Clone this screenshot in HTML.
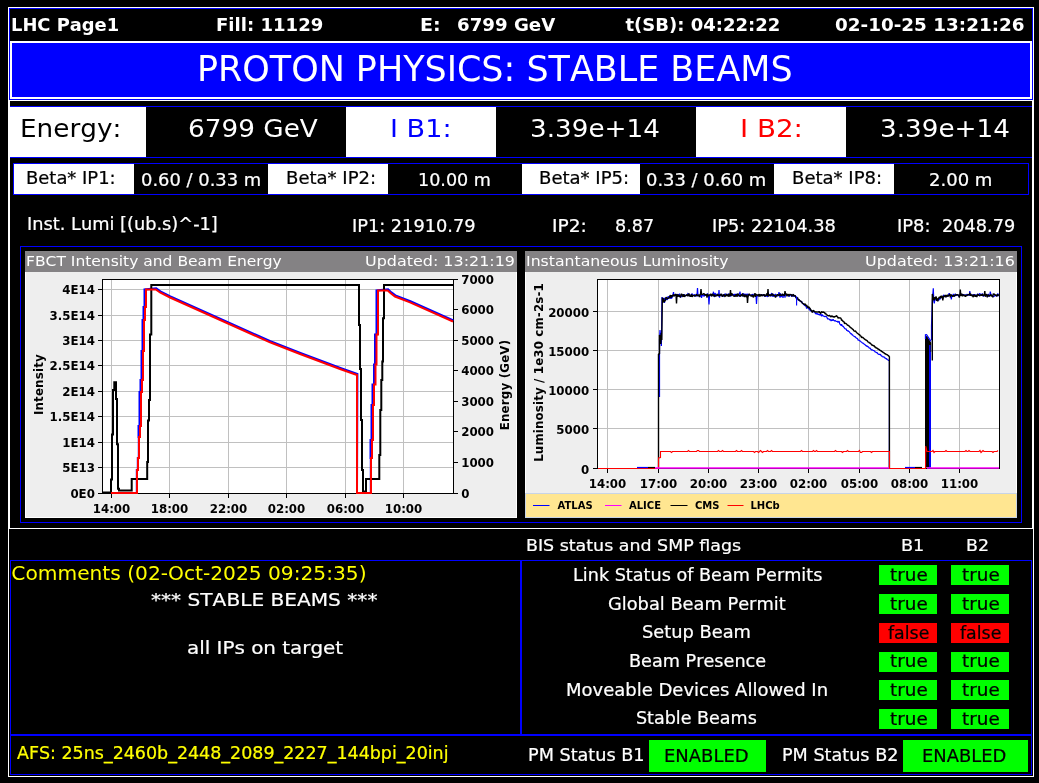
<!DOCTYPE html>
<html><head><meta charset="utf-8"><title>LHC Page1</title>
<style>
html,body{margin:0;padding:0;background:#000;}
body{width:1039px;height:783px;position:relative;overflow:hidden;font-family:"DejaVu Sans","Liberation Sans",sans-serif;}
#pg{position:absolute;left:0;top:0;width:1039px;height:783px;will-change:transform;}
.a{position:absolute;}
.t{white-space:pre;line-height:1;font-kerning:none;}
</style></head><body><div id="pg">
<div class="a" style="left:8px;top:7px;width:1026px;height:770px;box-sizing:border-box;border:1px solid #fff;"></div>
<div class="a" style="left:9px;top:8px;width:1024px;height:92px;box-sizing:border-box;border:1px solid #0000ff;"></div>
<div class="a" style="left:9px;top:100px;width:1024px;height:429px;box-sizing:border-box;border:1px solid #fff;"></div>
<div class="a t" style="top:15.77px;font-size:18px;color:#fff;font-weight:bold;left:10.96px;transform:scaleX(0.9927);transform-origin:0 0;">LHC Page1</div>
<div class="a t" style="top:15.77px;font-size:18px;color:#fff;font-weight:bold;left:215.84px;transform:scaleX(1.0039);transform-origin:0 0;">Fill: 11129</div>
<div class="a t" style="top:15.77px;font-size:18px;color:#fff;font-weight:bold;left:420.0px;transform:scaleX(1.0582);transform-origin:0 0;">E:</div>
<div class="a t" style="top:15.77px;font-size:18px;color:#fff;font-weight:bold;left:456.87px;transform:scaleX(1.0096);transform-origin:0 0;">6799 GeV</div>
<div class="a t" style="top:15.77px;font-size:18px;color:#fff;font-weight:bold;left:625.51px;">t(SB): 04:22:22</div>
<div class="a t" style="top:15.77px;font-size:18px;color:#fff;font-weight:bold;left:835.37px;transform:scaleX(1.0200);transform-origin:0 0;">02-10-25 13:21:26</div>
<div class="a" style="left:10px;top:41px;width:1022px;height:58px;background:#0000ff;box-sizing:border-box;border:2px solid #fff;"></div>
<div class="a t" style="top:52.39px;font-size:35px;color:#fff;left:197.37px;transform:scaleX(0.9978);transform-origin:0 0;">PROTON PHYSICS: STABLE BEAMS</div>
<div class="a" style="left:10px;top:106px;width:1022px;height:1px;background:#0000ff;"></div>
<div class="a" style="left:10px;top:157px;width:1022px;height:1px;background:#0000ff;"></div>
<div class="a" style="left:10px;top:107px;width:136px;height:50px;background:#fff;"></div>
<div class="a" style="left:346px;top:107px;width:150px;height:50px;background:#fff;"></div>
<div class="a" style="left:696px;top:107px;width:150px;height:50px;background:#fff;"></div>
<div class="a t" style="top:116.34px;font-size:25.6px;color:#000;left:20.22px;transform:scaleX(1.0268);transform-origin:0 0;">Energy:</div>
<div class="a t" style="top:116.34px;font-size:25.6px;color:#fff;left:187.86px;transform:scaleX(1.0274);transform-origin:0 0;">6799 GeV</div>
<div class="a t" style="top:116.34px;font-size:25.6px;color:#0000ff;left:390.04px;transform:scaleX(1.0577);transform-origin:0 0;">I B1:</div>
<div class="a t" style="top:116.34px;font-size:25.6px;color:#fff;left:529.6px;transform:scaleX(1.0244);transform-origin:0 0;">3.39e+14</div>
<div class="a t" style="top:116.34px;font-size:25.6px;color:#f00;left:739.58px;transform:scaleX(1.0824);transform-origin:0 0;">I B2:</div>
<div class="a t" style="top:116.34px;font-size:25.6px;color:#fff;left:880.2px;transform:scaleX(1.0252);transform-origin:0 0;">3.39e+14</div>
<div class="a" style="left:13px;top:163px;width:1016px;height:32px;box-sizing:border-box;border:1px solid #0000ff;"></div>
<div class="a" style="left:14px;top:164px;width:120px;height:30px;background:#fff;"></div>
<div class="a" style="left:268px;top:164px;width:120px;height:30px;background:#fff;"></div>
<div class="a" style="left:522px;top:164px;width:118px;height:30px;background:#fff;"></div>
<div class="a" style="left:774px;top:164px;width:120px;height:30px;background:#fff;"></div>
<div class="a t" style="top:170.22px;font-size:17px;color:#000;-webkit-text-stroke:0.22px;left:25.74px;transform:scaleX(1.0552);transform-origin:0 0;">Beta* IP1:</div>
<div class="a t" style="top:172.02px;font-size:17px;color:#fff;-webkit-text-stroke:0.22px;left:140.57px;transform:scaleX(1.0525);transform-origin:0 0;">0.60 / 0.33 m</div>
<div class="a t" style="top:170.22px;font-size:17px;color:#000;-webkit-text-stroke:0.22px;left:285.73px;transform:scaleX(1.0613);transform-origin:0 0;">Beta* IP2:</div>
<div class="a t" style="top:172.02px;font-size:17px;color:#fff;-webkit-text-stroke:0.22px;left:418.07px;transform:scaleX(1.0324);transform-origin:0 0;">10.00 m</div>
<div class="a t" style="top:170.22px;font-size:17px;color:#000;-webkit-text-stroke:0.22px;left:539.48px;transform:scaleX(1.0613);transform-origin:0 0;">Beta* IP5:</div>
<div class="a t" style="top:172.02px;font-size:17px;color:#fff;-webkit-text-stroke:0.22px;left:646.32px;transform:scaleX(1.0525);transform-origin:0 0;">0.33 / 0.60 m</div>
<div class="a t" style="top:170.22px;font-size:17px;color:#000;-webkit-text-stroke:0.22px;left:791.98px;transform:scaleX(1.0613);transform-origin:0 0;">Beta* IP8:</div>
<div class="a t" style="top:172.02px;font-size:17px;color:#fff;-webkit-text-stroke:0.22px;left:929.43px;transform:scaleX(1.0591);transform-origin:0 0;">2.00 m</div>
<div class="a t" style="top:216.42px;font-size:17px;color:#fff;-webkit-text-stroke:0.22px;left:27.01px;transform:scaleX(1.0447);transform-origin:0 0;">Inst. Lumi [(ub.s)^-1]</div>
<div class="a t" style="top:218.32px;font-size:17px;color:#fff;-webkit-text-stroke:0.22px;left:352.16px;transform:scaleX(1.0436);transform-origin:0 0;">IP1: 21910.79</div>
<div class="a t" style="top:218.32px;font-size:17px;color:#fff;-webkit-text-stroke:0.22px;left:551.97px;transform:scaleX(1.0939);transform-origin:0 0;">IP2:</div>
<div class="a t" style="top:218.32px;font-size:17px;color:#fff;-webkit-text-stroke:0.22px;left:615.31px;transform:scaleX(1.0328);transform-origin:0 0;">8.87</div>
<div class="a t" style="top:218.32px;font-size:17px;color:#fff;-webkit-text-stroke:0.22px;left:711.75px;transform:scaleX(1.0468);transform-origin:0 0;">IP5: 22104.38</div>
<div class="a t" style="top:218.32px;font-size:17px;color:#fff;-webkit-text-stroke:0.22px;left:897.15px;transform:scaleX(1.0513);transform-origin:0 0;">IP8:</div>
<div class="a t" style="top:218.32px;font-size:17px;color:#fff;-webkit-text-stroke:0.22px;left:942.3px;transform:scaleX(1.0404);transform-origin:0 0;">2048.79</div>
<div class="a" style="left:20px;top:246px;width:1002px;height:277px;box-sizing:border-box;border:1px solid #0000ff;"></div>
<div class="a" style="left:25px;top:251px;width:492px;height:267px;background:#ffffff;"></div>
<div class="a" style="left:26px;top:251px;width:490px;height:266px;background:#eeeeee;"></div>
<div class="a" style="left:25px;top:251px;width:492px;height:21px;background:#848284;"></div>
<div class="a t" style="top:254.16px;font-size:14px;color:#fff;left:25.98px;transform:scaleX(1.1083);transform-origin:0 0;">FBCT Intensity and Beam Energy</div>
<div class="a t" style="top:254.16px;font-size:14px;color:#fff;left:364.86px;transform:scaleX(1.1396);transform-origin:0 0;">Updated: 13:21:19</div>
<div class="a" style="left:525px;top:251px;width:492px;height:267px;background:#ffffff;"></div>
<div class="a" style="left:526px;top:251px;width:490px;height:266px;background:#eeeeee;"></div>
<div class="a" style="left:525px;top:251px;width:492px;height:21px;background:#848284;"></div>
<div class="a t" style="top:254.16px;font-size:14px;color:#fff;left:525.96px;transform:scaleX(1.1215);transform-origin:0 0;">Instantaneous Luminosity</div>
<div class="a t" style="top:254.16px;font-size:14px;color:#fff;left:864.86px;transform:scaleX(1.1387);transform-origin:0 0;">Updated: 13:21:16</div>
<svg class="a" style="left:0;top:0" width="1039" height="783" viewBox="0 0 1039 783" font-family='"DejaVu Sans","Liberation Sans",sans-serif'>
<rect x="102.5" y="279.5" width="351" height="214" fill="#fff"/>
<path d="M111.5 280V493 M169.5 280V493 M228.5 280V493 M286.5 280V493 M345.5 280V493 M403.5 280V493 M103 467.5H453 M103 442.5H453 M103 416.5H453 M103 391.5H453 M103 365.5H453 M103 340.5H453 M103 315.5H453 M103 289.5H453" stroke="#c0c0c0" stroke-width="1" fill="none"/>
<rect x="102.5" y="279.5" width="351" height="214" fill="none" stroke="#000" stroke-width="1"/>
<polyline points="111.0,493.0 136.1,493.0 136.8,493.0 136.8,470.0 137.8,470.0 137.8,458.0 138.8,458.0 138.8,437.0 138.5,437.0 138.5,426.0 139.5,426.0 139.5,392.0 140.5,392.0 140.5,380.0 141.5,380.0 141.5,351.0 142.5,351.0 142.5,320.0 143.5,320.0 143.5,307.0 144.5,307.0 144.5,289.5 156.2,288.4 160.4,291.4 170.4,296.4 228.4,322.4 270.4,341.2 300.4,352.9 340.4,367.9 357.4,373.9 357.0,493.0 369.8,493.0 370.8,493.0 370.8,458.0 370.5,458.0 370.5,440.0 371.5,440.0 371.5,405.0 372.5,405.0 372.5,384.5 374.0,384.5 374.0,364.5 375.0,364.5 375.0,334.5 376.5,334.5 376.5,290.5 388.1,289.4 391.4,292.4 395.4,295.4 410.4,301.2 453.4,320.4" stroke="#0000ff" stroke-width="2" fill="none" stroke-linejoin="miter"/>
<polyline points="102.0,492.5 111.0,492.5 111.0,479.5 112.0,479.5 112.0,434.5 113.0,434.5 113.0,390.0 114.3,390.0 114.3,382.3 116.0,382.3 116.0,399.0 117.0,399.0 117.0,444.3 118.0,444.3 118.0,488.7 119.0,488.7 119.0,490.5 131.7,490.5 131.7,479.0 147.2,479.0 147.2,462.0 148.0,462.0 148.0,420.6 149.0,420.6 149.0,400.0 150.0,400.0 150.0,334.5 151.3,334.5 151.3,285.0 359.0,285.0 359.0,325.0 360.0,325.0 360.0,369.0 361.0,369.0 361.0,420.0 362.0,420.0 362.0,470.0 363.0,470.0 363.0,491.5 366.0,491.5 366.0,479.0 379.3,479.0 379.3,455.0 380.3,455.0 380.3,410.0 381.3,410.0 381.3,380.0 382.3,380.0 382.3,361.6 383.0,361.6 383.0,318.3 384.0,318.3 384.0,285.0 453.0,285.0" stroke="#000" stroke-width="2" fill="none" stroke-linejoin="miter"/>
<polyline points="111.0,493.0 136.3,493.0 137.0,493.0 137.0,470.0 138.0,470.0 138.0,458.0 139.0,458.0 139.0,437.0 140.0,437.0 140.0,426.0 141.0,426.0 141.0,392.0 142.0,392.0 142.0,380.0 143.0,380.0 143.0,351.0 144.0,351.0 144.0,320.0 145.0,320.0 145.0,307.0 146.0,307.0 146.0,289.5 155.8,289.5 160.0,292.5 170.0,297.5 228.0,323.5 270.0,342.3 300.0,354.0 340.0,369.0 357.0,375.0 357.0,493.0 370.0,493.0 371.0,493.0 371.0,458.0 372.0,458.0 372.0,440.0 373.0,440.0 373.0,405.0 374.0,405.0 374.0,384.5 375.5,384.5 375.5,364.5 376.5,364.5 376.5,334.5 378.0,334.5 378.0,290.5 387.7,290.5 391.0,293.5 395.0,296.5 410.0,302.3 453.0,321.5" stroke="#ff0000" stroke-width="2" fill="none" stroke-linejoin="miter"/>
<path d="M98 493.5H102 M98 467.5H102 M98 442.5H102 M98 416.5H102 M98 391.5H102 M98 365.5H102 M98 340.5H102 M98 315.5H102 M98 289.5H102 M454 493.5H458 M454 462.5H458 M454 431.5H458 M454 401.5H458 M454 370.5H458 M454 340.5H458 M454 309.5H458 M454 279.5H458 M111.5 494V498 M169.5 494V498 M228.5 494V498 M286.5 494V498 M345.5 494V498 M403.5 494V498" stroke="#000" stroke-width="1" fill="none"/>
<text x="94.9" y="498.3" font-size="11.8" font-weight="bold" text-anchor="end">0E0</text>
<text x="94.9" y="472.3" font-size="11.8" font-weight="bold" text-anchor="end">5E13</text>
<text x="94.9" y="447.3" font-size="11.8" font-weight="bold" text-anchor="end">1E14</text>
<text x="94.9" y="421.3" font-size="11.8" font-weight="bold" text-anchor="end">1.5E14</text>
<text x="94.9" y="396.3" font-size="11.8" font-weight="bold" text-anchor="end">2E14</text>
<text x="94.9" y="370.3" font-size="11.8" font-weight="bold" text-anchor="end">2.5E14</text>
<text x="94.9" y="345.3" font-size="11.8" font-weight="bold" text-anchor="end">3E14</text>
<text x="94.9" y="320.3" font-size="11.8" font-weight="bold" text-anchor="end">3.5E14</text>
<text x="94.9" y="294.3" font-size="11.8" font-weight="bold" text-anchor="end">4E14</text>
<text x="461.2" y="498.3" font-size="11.8" font-weight="bold">0</text>
<text x="461.2" y="467.3" font-size="11.8" font-weight="bold">1000</text>
<text x="461.2" y="436.3" font-size="11.8" font-weight="bold">2000</text>
<text x="461.2" y="406.3" font-size="11.8" font-weight="bold">3000</text>
<text x="461.2" y="375.3" font-size="11.8" font-weight="bold">4000</text>
<text x="461.2" y="345.3" font-size="11.8" font-weight="bold">5000</text>
<text x="461.2" y="314.3" font-size="11.8" font-weight="bold">6000</text>
<text x="461.2" y="284.3" font-size="11.8" font-weight="bold">7000</text>
<text x="111.5" y="513.4" font-size="11.8" font-weight="bold" text-anchor="middle">14:00</text>
<text x="169.5" y="513.4" font-size="11.8" font-weight="bold" text-anchor="middle">18:00</text>
<text x="228.5" y="513.4" font-size="11.8" font-weight="bold" text-anchor="middle">22:00</text>
<text x="286.5" y="513.4" font-size="11.8" font-weight="bold" text-anchor="middle">02:00</text>
<text x="345.5" y="513.4" font-size="11.8" font-weight="bold" text-anchor="middle">06:00</text>
<text x="403.5" y="513.4" font-size="11.8" font-weight="bold" text-anchor="middle">10:00</text>
<text transform="translate(43.4,384.6) rotate(-90)" font-size="11.8" font-weight="bold" letter-spacing="0.2" text-anchor="middle">Intensity</text>
<text transform="translate(509,385) rotate(-90)" font-size="11.8" font-weight="bold" letter-spacing="0.2" text-anchor="middle">Energy (GeV)</text>
<rect x="597.5" y="279.5" width="402" height="189" fill="#fff"/>
<path d="M607.5 280V468 M658.5 280V468 M708.5 280V468 M758.5 280V468 M808.5 280V468 M859.5 280V468 M909.5 280V468 M959.5 280V468 M598 428.5H999 M598 389.5H999 M598 350.5H999 M598 311.5H999" stroke="#c0c0c0" stroke-width="1" fill="none"/>
<rect x="597.5" y="279.5" width="402" height="189" fill="none" stroke="#000" stroke-width="1"/>
<polyline points="659.5,397.0 659.5,376.0 659.5,340.0 660.0,330.0 660.8,338.0 661.4,346.0 662.0,297.0 662.5,301.5 663.0,301.8 663.5,298.4 664.0,298.1 664.5,302.9 665.0,297.9 665.5,298.9 666.0,299.6 666.5,298.9 667.0,299.8 667.5,299.1 668.0,296.7 668.5,296.4 669.0,297.8 669.5,298.1 670.0,298.1 670.5,296.1 671.0,298.9 671.5,296.8 672.0,298.2 672.5,296.1 673.0,294.7 673.5,292.0 674.0,295.7 674.5,295.9 675.0,295.5 675.5,295.1 676.0,295.2 676.5,294.8 677.0,294.4 677.5,294.6 678.0,296.8 678.5,294.4 679.0,295.3 679.5,293.7 680.0,295.4 680.5,297.6 681.0,296.1 681.5,296.8 682.0,295.4 682.5,295.3 683.0,295.0 683.5,295.4 684.0,294.3 684.5,295.1 685.0,295.1 685.5,295.8 686.0,295.4 686.5,295.8 687.0,295.0 687.5,295.3 688.0,293.0 688.5,296.0 689.0,294.9 689.5,294.5 690.0,296.1 690.5,295.3 691.0,294.8 691.5,295.2 692.0,293.5 692.5,295.4 693.0,295.0 693.5,295.6 694.0,295.1 694.5,294.5 695.0,296.3 695.5,296.0 696.0,294.8 696.5,296.3 697.0,294.7 697.5,288.0 698.0,296.0 698.5,295.4 699.0,295.5 699.5,296.1 700.0,296.4 700.5,295.8 701.0,295.2 701.5,297.9 702.0,296.0 702.5,294.3 703.0,295.0 703.5,295.3 704.0,296.5 704.5,295.7 705.0,294.3 705.5,294.9 706.0,295.4 706.5,295.4 707.0,295.1 707.5,293.4 708.0,295.3 708.5,296.3 709.0,304.5 709.5,296.5 710.0,294.8 710.5,295.3 711.0,294.8 711.5,294.7 712.0,295.4 712.5,295.6 713.0,294.5 713.5,291.7 714.0,296.3 714.5,296.8 715.0,293.1 715.5,294.1 716.0,295.5 716.5,295.1 717.0,294.1 717.5,295.0 718.0,296.1 718.5,295.8 719.0,290.0 719.5,297.6 720.0,295.0 720.5,294.4 721.0,294.4 721.5,295.0 722.0,295.5 722.5,295.0 723.0,296.8 723.5,295.8 724.0,294.5 724.5,295.6 725.0,293.6 725.5,294.7 726.0,293.9 726.5,295.3 727.0,294.3 727.5,295.0 728.0,294.5 728.5,293.6 729.0,295.3 729.5,294.9 730.0,294.5 730.5,296.5 731.0,294.7 731.5,295.1 732.0,295.1 732.5,294.5 733.0,295.0 733.5,294.7 734.0,294.3 734.5,295.8 735.0,293.9 735.5,295.5 736.0,294.4 736.5,294.2 737.0,294.0 737.5,295.6 738.0,294.4 738.5,296.3 739.0,293.6 739.5,294.2 740.0,291.5 740.5,296.3 741.0,294.9 741.5,294.6 742.0,295.1 742.5,296.4 743.0,293.3 743.5,293.8 744.0,295.4 744.5,294.9 745.0,293.7 745.5,296.0 746.0,296.7 746.5,294.0 747.0,294.5 747.5,294.0 748.0,295.8 748.5,295.4 749.0,293.9 749.5,295.2 750.0,295.0 750.5,295.7 751.0,296.1 751.5,294.8 752.0,294.7 752.5,294.7 753.0,294.0 753.5,296.2 754.0,295.5 754.5,295.2 755.0,295.5 755.5,295.8 756.0,295.8 756.5,304.0 757.0,295.8 757.5,296.2 758.0,295.4 758.5,294.2 759.0,296.1 759.5,294.6 760.0,294.8 760.5,295.2 761.0,295.2 761.5,294.6 762.0,295.6 762.5,294.8 763.0,295.5 763.5,295.6 764.0,294.4 764.5,296.5 765.0,295.5 765.5,296.2 766.0,295.9 766.5,294.5 767.0,296.3 767.5,296.9 768.0,294.7 768.5,293.7 769.0,296.0 769.5,294.6 770.0,294.5 770.5,296.0 771.0,296.2 771.5,293.0 772.0,294.3 772.5,296.5 773.0,294.9 773.5,294.0 774.0,296.8 774.5,295.7 775.0,295.2 775.5,294.0 776.0,294.7 776.5,296.0 777.0,296.2 777.5,295.9 778.0,294.6 778.5,294.6 779.0,292.0 779.5,294.5 780.0,297.7 780.5,293.4 781.0,296.9 781.5,296.3 782.0,294.5 782.5,295.0 783.0,297.9 783.5,294.2 784.0,295.2 784.5,294.0 785.0,297.7 785.5,294.4 786.0,295.2 786.5,294.7 787.0,295.3 787.5,294.5 788.0,294.5 788.5,294.8 789.0,296.8 789.5,295.3 790.0,295.1 790.5,294.5 791.0,295.0 791.5,296.7 792.0,294.5 792.5,295.2 793.0,295.9 793.5,296.8 793.6,295.6 794.1,295.3 794.6,296.4 795.1,295.2 795.6,296.6 796.1,298.3 796.6,297.7 797.1,298.6 797.6,298.2 798.1,299.9 798.6,300.1 799.1,300.7 799.6,300.3 800.1,301.2 800.6,300.9 801.1,302.1 801.6,301.2 802.1,303.0 802.6,303.5 803.1,303.4 803.6,304.8 804.1,304.4 804.6,305.9 805.1,305.1 805.6,305.4 806.1,306.2 806.6,308.6 807.1,306.3 807.6,307.4 808.1,307.8 808.6,308.9 809.1,308.0 809.6,310.4 810.1,308.7 810.6,311.0 811.1,310.4 811.6,310.5 812.1,311.8 812.6,310.9 813.1,312.1 813.6,311.6 814.1,311.8 814.6,311.9 815.1,312.8 815.6,314.0 816.1,313.0 816.6,314.2 817.1,313.2 817.6,314.2 818.1,314.4 818.6,314.1 819.1,314.8 819.6,314.7 820.1,314.9 820.6,314.0 821.1,315.2 821.6,316.3 822.1,314.4 822.6,315.6 823.1,315.8 823.6,316.1 824.1,316.4 824.6,316.7 825.1,316.2 825.6,316.7 826.1,316.4 826.6,316.7 827.1,317.8 827.6,318.9 828.1,319.0 828.6,318.9 829.1,319.0 829.6,319.9 830.1,319.6 830.6,319.8 831.1,321.1 831.6,319.8 832.1,320.2 832.6,320.6 833.1,319.2 833.6,320.2 834.1,320.6 834.6,321.1 835.1,320.5 835.6,321.0 836.1,321.3 836.6,321.5 837.1,321.1 837.6,321.9 838.1,322.2 838.6,321.8 839.1,321.0 839.6,323.5 840.1,324.5 840.6,324.1 841.1,325.8 841.6,324.3 842.1,325.7 842.6,326.4 843.1,326.0 843.6,326.9 844.1,327.5 844.6,328.4 845.1,328.8 845.6,328.9 846.1,328.9 846.6,330.3 847.1,330.4 847.6,331.0 848.1,330.6 848.6,331.5 849.1,331.5 849.6,332.2 850.1,333.0 850.6,333.4 851.1,334.0 851.6,333.8 852.1,334.9 852.6,334.9 853.1,335.6 853.6,336.0 854.1,336.3 854.6,336.7 855.1,336.5 855.6,337.5 856.1,337.8 856.6,338.2 857.1,338.4 857.6,338.8 858.1,340.2 858.6,339.9 859.1,340.2 859.6,341.0 860.1,340.9 860.6,341.2 861.1,342.0 861.6,342.2 862.1,342.7 862.6,343.1 863.1,343.2 863.6,343.6 864.1,344.2 864.6,344.4 865.1,344.8 865.6,345.4 866.1,345.6 866.6,346.3 867.1,346.0 867.6,346.6 868.1,346.9 868.6,346.9 869.1,347.9 869.6,348.1 870.1,348.1 870.6,349.1 871.1,349.3 871.6,350.2 872.1,349.7 872.6,350.0 873.1,350.4 873.6,350.5 874.1,350.9 874.6,350.9 875.1,351.9 875.6,352.0 876.1,352.4 876.6,352.7 877.1,352.6 877.6,353.6 878.1,353.9 878.6,354.4 879.1,354.2 879.6,354.4 880.1,354.6 880.6,354.4 881.1,355.9 881.6,355.7 882.1,356.4 882.6,356.7 883.1,356.9 883.6,356.8 884.1,356.9 884.6,357.9 885.1,357.9 885.6,358.3 886.1,358.8 886.6,358.5 887.1,359.8 887.6,359.6 888.1,360.1 888.6,360.4 889.1,360.4 889.4,360.6 889.4,468.0" stroke="#0000ff" stroke-width="1.2" fill="none" stroke-linejoin="bevel"/>
<polyline points="931.5,340.0 931.5,326.0 932.4,300.0 933.3,288.3 933.6,296.0 933.8,301.4 934.3,303.4 934.8,299.1 935.3,299.7 935.8,300.0 936.3,298.2 936.8,300.4 937.3,300.7 937.8,298.8 938.3,300.1 938.8,300.3 939.3,297.6 939.8,299.4 940.3,298.5 940.8,296.5 941.3,297.8 941.8,296.6 942.3,297.5 942.8,298.7 943.3,295.8 943.8,294.9 944.3,296.3 944.8,295.6 945.3,296.5 945.8,296.1 946.3,296.9 946.8,296.3 947.3,296.2 947.8,295.6 948.3,296.1 948.8,293.8 949.3,293.3 949.8,294.0 950.3,296.2 950.8,295.5 951.3,299.5 951.8,296.3 952.3,296.5 952.8,295.9 953.3,294.0 953.8,295.7 954.3,296.0 954.8,296.5 955.3,293.7 955.8,295.4 956.3,294.6 956.8,295.8 957.3,294.5 957.8,295.1 958.3,294.7 958.8,296.5 959.3,295.0 959.8,295.1 960.3,294.6 960.8,294.3 961.3,294.4 961.8,294.4 962.3,294.7 962.8,295.1 963.3,294.3 963.8,295.0 964.3,295.7 964.8,295.0 965.3,294.8 965.8,295.3 966.3,295.6 966.8,294.4 967.3,294.3 967.8,294.9 968.3,295.1 968.8,294.4 969.3,295.5 969.8,291.0 970.3,295.2 970.8,295.7 971.3,295.2 971.8,295.0 972.3,295.9 972.8,294.9 973.3,295.0 973.8,294.3 974.3,295.4 974.8,295.3 975.3,295.1 975.8,294.6 976.3,296.2 976.8,296.3 977.3,295.0 977.8,293.8 978.3,295.4 978.8,295.1 979.3,295.4 979.8,293.1 980.3,295.2 980.8,295.1 981.3,294.5 981.8,294.5 982.3,293.5 982.8,295.1 983.3,296.5 983.8,294.8 984.3,295.8 984.8,295.1 985.3,295.8 985.8,295.0 986.3,295.4 986.8,294.9 987.3,295.4 987.8,295.3 988.3,293.9 988.8,296.8 989.3,295.2 989.8,295.6 990.3,291.5 990.8,294.4 991.3,294.9 991.8,295.0 992.3,296.2 992.8,296.4 993.3,296.6 993.8,296.5 994.3,296.3 994.8,295.4 995.3,296.0 995.8,295.0 996.3,295.4 996.8,295.8 997.3,295.8 997.8,293.4 998.3,295.9 998.8,295.5" stroke="#0000ff" stroke-width="1.2" fill="none" stroke-linejoin="bevel"/>
<polyline points="658.5,468.0 658.5,354.0 659.5,354.0 659.5,335.0 660.3,337.0 660.8,344.0 661.3,333.0 661.8,340.0 662.3,297.5 662.5,300.7 663.0,302.6 663.5,298.3 664.0,301.5 664.5,301.9 665.0,300.4 665.5,300.5 666.0,297.2 666.5,297.7 667.0,297.9 667.5,298.8 668.0,298.0 668.5,298.4 669.0,297.7 669.5,297.2 670.0,295.6 670.5,295.2 671.0,297.8 671.5,296.1 672.0,295.3 672.5,296.5 673.0,295.0 673.5,294.8 674.0,296.3 674.5,294.5 675.0,295.8 675.5,294.1 676.0,294.6 676.5,303.5 677.0,294.4 677.5,296.9 678.0,294.4 678.5,296.6 679.0,295.1 679.5,296.2 680.0,296.8 680.5,297.2 681.0,294.7 681.5,293.8 682.0,294.6 682.5,295.6 683.0,296.9 683.5,294.5 684.0,294.9 684.5,296.9 685.0,295.9 685.5,295.6 686.0,295.2 686.5,295.5 687.0,294.3 687.5,295.7 688.0,295.8 688.5,295.4 689.0,293.3 689.5,296.5 690.0,295.6 690.5,296.7 691.0,295.6 691.5,294.2 692.0,296.9 692.5,296.3 693.0,295.1 693.5,296.0 694.0,295.2 694.5,296.3 695.0,295.8 695.5,295.8 696.0,295.3 696.5,294.1 697.0,295.9 697.5,295.4 698.0,295.4 698.5,295.8 699.0,294.6 699.5,297.2 700.0,294.7 700.5,294.4 701.0,289.0 701.5,293.8 702.0,295.0 702.5,294.2 703.0,294.5 703.5,293.6 704.0,293.7 704.5,294.2 705.0,295.2 705.5,295.1 706.0,294.5 706.5,294.4 707.0,297.7 707.5,294.0 708.0,295.0 708.5,296.2 709.0,295.3 709.5,295.0 710.0,295.1 710.5,294.2 711.0,294.3 711.5,296.4 712.0,295.7 712.5,293.8 713.0,295.5 713.5,294.3 714.0,296.4 714.5,295.2 715.0,295.0 715.5,296.5 716.0,295.7 716.5,295.9 717.0,295.0 717.5,294.0 718.0,295.5 718.5,294.8 719.0,296.0 719.5,294.9 720.0,296.0 720.5,294.5 721.0,294.7 721.5,294.0 722.0,296.3 722.5,296.4 723.0,295.4 723.5,295.1 724.0,294.4 724.5,295.5 725.0,296.9 725.5,295.2 726.0,295.8 726.5,293.8 727.0,295.8 727.5,295.9 728.0,295.7 728.5,294.3 729.0,296.8 729.5,293.5 730.0,295.9 730.5,290.0 731.0,296.0 731.5,294.0 732.0,293.6 732.5,294.6 733.0,295.4 733.5,296.0 734.0,296.0 734.5,295.8 735.0,296.8 735.5,295.5 736.0,294.7 736.5,294.9 737.0,296.9 737.5,294.1 738.0,293.9 738.5,294.9 739.0,295.6 739.5,294.8 740.0,296.8 740.5,295.1 741.0,296.1 741.5,294.3 742.0,295.7 742.5,293.4 743.0,296.4 743.5,295.3 744.0,295.3 744.5,297.0 745.0,294.5 745.5,296.2 746.0,295.1 746.5,297.3 747.0,294.5 747.5,303.0 748.0,296.7 748.5,295.9 749.0,294.0 749.5,294.4 750.0,295.1 750.5,294.8 751.0,295.8 751.5,296.4 752.0,295.7 752.5,294.8 753.0,296.9 753.5,297.2 754.0,295.8 754.5,294.5 755.0,293.2 755.5,296.8 756.0,294.0 756.5,295.1 757.0,295.1 757.5,295.2 758.0,294.6 758.5,294.8 759.0,296.5 759.5,294.2 760.0,295.0 760.5,296.4 761.0,294.7 761.5,294.8 762.0,295.8 762.5,295.9 763.0,294.4 763.5,295.4 764.0,294.3 764.5,295.6 765.0,296.3 765.5,295.4 766.0,294.7 766.5,295.8 767.0,293.1 767.5,295.8 768.0,289.0 768.5,296.5 769.0,295.3 769.5,295.4 770.0,295.0 770.5,295.1 771.0,295.9 771.5,294.2 772.0,295.0 772.5,293.6 773.0,295.5 773.5,295.5 774.0,295.2 774.5,295.5 775.0,295.6 775.5,297.5 776.0,296.3 776.5,295.4 777.0,294.9 777.5,294.4 778.0,295.2 778.5,294.9 779.0,296.0 779.5,294.4 780.0,294.2 780.5,294.8 781.0,295.7 781.5,295.0 782.0,295.6 782.5,293.8 783.0,294.7 783.5,294.9 784.0,295.5 784.5,295.6 785.0,291.0 785.5,293.9 786.0,294.2 786.5,294.0 787.0,296.4 787.5,294.5 788.0,294.5 788.5,294.4 789.0,296.0 789.5,294.9 790.0,294.3 790.5,294.8 791.0,294.2 791.5,295.2 792.0,296.4 792.5,295.1 793.0,294.9 793.5,294.3 793.6,295.8 794.1,295.5 794.6,295.9 795.1,295.6 795.6,296.9 796.1,297.5 796.6,297.5 797.1,298.0 797.6,297.7 798.1,299.7 798.6,299.6 799.1,299.6 799.6,300.6 800.1,300.8 800.6,301.1 801.1,301.4 801.6,301.9 802.1,302.6 802.6,303.2 803.1,303.6 803.6,303.8 804.1,304.5 804.6,304.3 805.1,303.9 805.6,304.4 806.1,306.2 806.6,305.2 807.1,306.0 807.6,306.9 808.1,307.9 808.6,306.6 809.1,307.5 809.6,308.1 810.1,308.6 810.6,309.4 811.1,310.3 811.6,310.6 812.1,312.3 812.6,312.0 813.1,310.6 813.6,310.5 814.1,311.3 814.6,311.3 815.1,312.2 815.6,312.0 816.1,312.2 816.6,311.8 817.1,312.1 817.6,312.1 818.1,311.8 818.6,312.3 819.1,311.3 819.6,312.7 820.1,312.5 820.6,313.9 821.1,312.3 821.6,311.5 822.1,312.1 822.6,312.4 823.1,312.1 823.6,311.9 824.1,312.7 824.6,312.4 825.1,314.1 825.6,312.9 826.1,314.4 826.6,314.9 827.1,314.9 827.6,315.7 828.1,315.5 828.6,316.0 829.1,315.4 829.6,315.5 830.1,316.1 830.6,316.5 831.1,317.0 831.6,315.9 832.1,316.2 832.6,316.2 833.1,317.1 833.6,316.4 834.1,317.4 834.6,316.6 835.1,316.5 835.6,316.5 836.1,316.0 836.6,315.6 837.1,316.8 837.6,316.7 838.1,318.4 838.6,317.5 839.1,317.9 839.6,317.9 840.1,318.2 840.6,318.0 841.1,318.6 841.6,320.6 842.1,320.0 842.6,320.5 843.1,321.6 843.6,321.6 844.1,322.0 844.6,323.7 845.1,323.1 845.6,323.3 846.1,323.7 846.6,324.0 847.1,324.8 847.6,325.3 848.1,325.3 848.6,325.8 849.1,325.9 849.6,326.7 850.1,327.4 850.6,327.3 851.1,328.0 851.6,328.2 852.1,328.7 852.6,329.3 853.1,329.4 853.6,330.4 854.1,330.9 854.6,331.3 855.1,331.0 855.6,331.2 856.1,332.0 856.6,332.6 857.1,333.0 857.6,333.3 858.1,333.8 858.6,334.1 859.1,334.8 859.6,334.6 860.1,335.6 860.6,336.0 861.1,336.1 861.6,337.8 862.1,337.1 862.6,337.5 863.1,337.5 863.6,338.3 864.1,338.7 864.6,339.4 865.1,339.3 865.6,340.2 866.1,339.8 866.6,340.6 867.1,340.5 867.6,341.4 868.1,342.1 868.6,341.8 869.1,342.8 869.6,343.2 870.1,342.9 870.6,343.5 871.1,344.1 871.6,344.8 872.1,345.4 872.6,345.2 873.1,345.4 873.6,345.9 874.1,345.5 874.6,346.8 875.1,347.0 875.6,347.2 876.1,348.1 876.6,347.9 877.1,348.1 877.6,349.0 878.1,348.8 878.6,349.3 879.1,349.5 879.6,349.9 880.1,350.4 880.6,350.7 881.1,350.6 881.6,351.7 882.1,351.5 882.6,351.8 883.1,352.5 883.6,352.4 884.1,353.1 884.6,353.6 885.1,353.8 885.6,353.8 886.1,354.5 886.6,354.5 887.1,354.7 887.6,355.0 888.1,355.6 888.6,355.7 889.1,356.6 889.4,356.4 889.4,468.0" stroke="#000" stroke-width="1.4" fill="none" stroke-linejoin="bevel"/>
<polyline points="932.3,360.5 932.3,294.0 933.8,300.1 934.3,299.8 934.8,297.1 935.3,299.2 935.8,296.7 936.3,297.1 936.8,300.8 937.3,298.3 937.8,301.3 938.3,298.3 938.8,298.3 939.3,297.1 939.8,297.1 940.3,298.2 940.8,295.8 941.3,298.2 941.8,295.7 942.3,296.7 942.8,300.4 943.3,296.9 943.8,296.0 944.3,296.6 944.8,296.6 945.3,295.0 945.8,297.4 946.3,295.1 946.8,296.6 947.3,294.8 947.8,296.5 948.3,295.8 948.8,295.1 949.3,295.6 949.8,294.0 950.3,297.3 950.8,295.2 951.3,294.7 951.8,295.2 952.3,295.6 952.8,296.8 953.3,295.8 953.8,295.7 954.3,296.3 954.8,294.6 955.3,295.4 955.8,295.1 956.3,294.7 956.8,294.9 957.3,294.8 957.8,294.6 958.3,295.5 958.8,294.9 959.3,297.7 959.8,295.5 960.3,289.5 960.8,295.7 961.3,294.8 961.8,293.7 962.3,296.3 962.8,294.9 963.3,294.9 963.8,295.9 964.3,295.2 964.8,295.1 965.3,296.8 965.8,294.8 966.3,295.9 966.8,295.6 967.3,295.4 967.8,294.6 968.3,294.8 968.8,294.5 969.3,294.7 969.8,292.9 970.3,295.9 970.8,294.0 971.3,295.3 971.8,295.6 972.3,294.8 972.8,296.4 973.3,296.9 973.8,295.5 974.3,294.5 974.8,295.8 975.3,296.6 975.8,295.8 976.3,295.0 976.8,297.1 977.3,294.6 977.8,294.4 978.3,294.6 978.8,295.4 979.3,295.4 979.8,295.9 980.3,295.0 980.8,295.0 981.3,294.5 981.8,295.8 982.3,294.1 982.8,295.0 983.3,295.8 983.8,295.1 984.3,294.8 984.8,291.0 985.3,296.4 985.8,296.0 986.3,294.2 986.8,294.8 987.3,297.3 987.8,295.2 988.3,295.4 988.8,295.1 989.3,296.2 989.8,295.7 990.3,295.4 990.8,294.4 991.3,296.1 991.8,295.8 992.3,295.9 992.8,297.3 993.3,293.5 993.8,294.4 994.3,294.0 994.8,294.7 995.3,294.9 995.8,295.4 996.3,295.2 996.8,296.4 997.3,294.4 997.8,295.4 998.3,295.2 998.8,294.5" stroke="#000" stroke-width="1.4" fill="none" stroke-linejoin="bevel"/>
<path d="M796.6 296.5V305.5" stroke="#0000ff" stroke-width="1.1" fill="none"/>
<path d="M929.3 341.5V467.5M930.4 342.5V467.5" stroke="#0000ff" stroke-width="1.2" fill="none"/>
<path d="M925 467.5V336.5L927 336L931.2 342.8L931.2 352L929 352V467.5Z" fill="#000"/>
<path d="M925.4 339V334.8L926.6 334.6L931 341.4" stroke="#0000ff" stroke-width="1.1" fill="none"/>
<path d="M929.8 345V467.5" stroke="#0000ff" stroke-width="1.5" fill="none"/>
<polyline points="598.0,468.5 658.5,468.5 658.5,458.0 660.5,457.5 660.5,451.5 661.5,451.5 662.5,451.5 663.5,451.5 664.5,451.5 665.5,451.5 666.5,451.5 667.5,451.5 668.5,451.5 669.5,451.5 670.5,451.5 671.5,452.5 672.5,451.5 673.5,451.5 674.5,451.5 675.5,451.5 676.5,451.5 677.5,451.5 678.5,451.5 679.5,451.5 680.5,451.5 681.5,451.5 682.5,451.5 683.5,451.5 684.5,451.5 685.5,451.5 686.5,451.5 687.5,451.5 688.5,450.5 689.5,451.5 690.5,451.5 691.5,451.5 692.5,451.5 693.5,451.5 694.5,451.5 695.5,451.5 696.5,451.5 697.5,450.5 698.5,450.5 699.5,451.5 700.5,451.5 701.5,451.5 702.5,451.5 703.5,451.5 704.5,451.5 705.5,451.5 706.5,451.5 707.5,451.5 708.5,451.5 709.5,451.5 710.5,451.5 711.5,451.5 712.5,451.5 713.5,451.5 714.5,451.5 715.5,451.5 716.5,451.5 717.5,451.5 718.5,450.5 719.5,451.5 720.5,451.5 721.5,451.5 722.5,450.5 723.5,451.5 724.5,451.5 725.5,451.5 726.5,451.5 727.5,451.5 728.5,451.5 729.5,451.5 730.5,451.5 731.5,451.5 732.5,451.5 733.5,451.5 734.5,451.5 735.5,451.5 736.5,450.5 737.5,451.5 738.5,451.5 739.5,451.5 740.5,451.5 741.5,450.5 742.5,451.5 743.5,451.5 744.5,451.5 745.5,451.5 746.5,451.5 747.5,451.5 748.5,451.5 749.5,451.5 750.5,451.5 751.5,451.5 752.5,451.5 753.5,451.5 754.5,452.5 755.5,451.5 756.5,451.5 757.5,451.5 758.5,452.5 759.5,451.5 760.5,450.5 761.5,451.5 762.5,452.5 763.5,451.5 764.5,451.5 765.5,451.5 766.5,451.5 767.5,450.5 768.5,451.5 769.5,451.5 770.5,451.5 771.5,450.5 772.5,451.5 773.5,451.5 774.5,451.5 775.5,451.5 776.5,451.5 777.5,451.5 778.5,451.5 779.5,451.5 780.5,451.5 781.5,451.5 782.5,451.5 783.5,451.5 784.5,451.5 785.5,451.5 786.5,451.5 787.5,451.5 788.5,451.5 789.5,451.5 790.5,451.5 791.5,451.5 792.5,451.5 793.5,451.5 794.5,451.5 795.5,451.5 796.5,451.5 797.5,451.5 798.5,451.5 799.5,451.5 800.5,451.5 801.5,450.5 802.5,451.5 803.5,451.5 804.5,451.5 805.5,451.5 806.5,451.5 807.5,451.5 808.5,451.5 809.5,451.5 810.5,451.5 811.5,451.5 812.5,451.5 813.5,450.5 814.5,451.5 815.5,451.5 816.5,450.5 817.5,451.5 818.5,451.5 819.5,451.5 820.5,451.5 821.5,451.5 822.5,451.5 823.5,451.5 824.5,451.5 825.5,451.5 826.5,451.5 827.5,451.5 828.5,451.5 829.5,451.5 830.5,451.5 831.5,451.5 832.5,451.5 833.5,451.5 834.5,451.5 835.5,450.5 836.5,451.5 837.5,451.5 838.5,451.5 839.5,451.5 840.5,451.5 841.5,451.5 842.5,452.5 843.5,451.5 844.5,451.5 845.5,451.5 846.5,451.5 847.5,450.5 848.5,451.5 849.5,451.5 850.5,451.5 851.5,451.5 852.5,451.5 853.5,451.5 854.5,451.5 855.5,451.5 856.5,451.5 857.5,451.5 858.5,451.5 859.5,450.5 860.5,452.5 861.5,452.5 862.5,451.5 863.5,451.5 864.5,451.5 865.5,451.5 866.5,451.5 867.5,451.5 868.5,451.5 869.5,451.5 870.5,451.5 871.5,452.5 872.5,451.5 873.5,451.5 874.5,451.5 875.5,451.5 876.5,451.5 877.5,451.5 878.5,451.5 879.5,451.5 880.5,451.5 881.5,451.5 882.5,451.5 883.5,451.5 884.5,451.5 885.5,451.5 886.5,451.5 887.5,451.5 888.5,451.5 889.5,451.5 889.5,468.5 925.5,468.5 925.8,446.0 927.0,451.5 928.0,451.5 929.0,451.5 930.0,451.5 931.0,451.5 932.0,451.5 933.0,450.5 934.0,452.5 935.0,451.5 936.0,451.5 937.0,451.5 938.0,451.5 939.0,451.5 940.0,451.5 941.0,451.5 942.0,451.5 943.0,451.5 944.0,451.5 945.0,451.5 946.0,450.5 947.0,451.5 948.0,451.5 949.0,451.5 950.0,451.5 951.0,451.5 952.0,451.5 953.0,451.5 954.0,451.5 955.0,451.5 956.0,451.5 957.0,451.5 958.0,451.5 959.0,451.5 960.0,451.5 961.0,451.5 962.0,451.5 963.0,451.5 964.0,451.5 965.0,451.5 966.0,450.5 967.0,451.5 968.0,451.5 969.0,450.5 970.0,451.5 971.0,451.5 972.0,451.5 973.0,451.5 974.0,451.5 975.0,451.5 976.0,451.5 977.0,451.5 978.0,451.5 979.0,451.5 980.0,450.5 981.0,452.5 982.0,451.5 983.0,450.5 984.0,451.5 985.0,451.5 986.0,451.5 987.0,451.5 988.0,451.5 989.0,451.5 990.0,451.5 991.0,451.5 992.0,451.5 993.0,452.5 994.0,451.5 995.0,451.5 996.0,451.5 997.0,451.5 998.0,450.5" stroke="#ff0000" stroke-width="1.1" fill="none"/>
<path d="M637 467.5H648" stroke="#0000ff" stroke-width="1.2"/><path d="M648 467.5H655" stroke="#000" stroke-width="1.2"/>
<path d="M905 467.5H915" stroke="#0000ff" stroke-width="1.2"/><path d="M915 467.5H922" stroke="#000" stroke-width="1.2"/>
<path d="M655 467.9H889M927 467.9H999" stroke="#ff00ff" stroke-width="1.5" fill="none"/>
<path d="M593 468.5H597 M593 428.5H597 M593 389.5H597 M593 350.5H597 M593 311.5H597 M607.5 469V473 M658.5 469V473 M708.5 469V473 M758.5 469V473 M808.5 469V473 M859.5 469V473 M909.5 469V473 M959.5 469V473" stroke="#000" stroke-width="1" fill="none"/>
<text x="589.2" y="473.7" font-size="11.8" font-weight="bold" text-anchor="end">0</text>
<text x="589.2" y="433.7" font-size="11.8" font-weight="bold" text-anchor="end">5000</text>
<text x="589.2" y="394.7" font-size="11.8" font-weight="bold" text-anchor="end">10000</text>
<text x="589.2" y="355.7" font-size="11.8" font-weight="bold" text-anchor="end">15000</text>
<text x="589.2" y="316.7" font-size="11.8" font-weight="bold" text-anchor="end">20000</text>
<text x="607.5" y="488.4" font-size="11.8" font-weight="bold" text-anchor="middle">14:00</text>
<text x="658.5" y="488.4" font-size="11.8" font-weight="bold" text-anchor="middle">17:00</text>
<text x="708.5" y="488.4" font-size="11.8" font-weight="bold" text-anchor="middle">20:00</text>
<text x="758.5" y="488.4" font-size="11.8" font-weight="bold" text-anchor="middle">23:00</text>
<text x="808.5" y="488.4" font-size="11.8" font-weight="bold" text-anchor="middle">02:00</text>
<text x="859.5" y="488.4" font-size="11.8" font-weight="bold" text-anchor="middle">05:00</text>
<text x="909.5" y="488.4" font-size="11.8" font-weight="bold" text-anchor="middle">08:00</text>
<text x="959.5" y="488.4" font-size="11.8" font-weight="bold" text-anchor="middle">11:00</text>
<text transform="translate(543.2,372.5) rotate(-90)" font-size="11.8" font-weight="bold" letter-spacing="0.15" text-anchor="middle">Luminosity / 1e30 cm-2s-1</text>
<rect x="525.5" y="493.5" width="491" height="24" fill="#ffe691" stroke="#c8d4e6" stroke-width="1"/>
<path d="M533 505.5H549.5" stroke="#0000ff" stroke-width="1"/>
<text x="557.5" y="509.2" font-size="10" font-weight="bold">ATLAS</text>
<path d="M605 505.5H621.5" stroke="#ff00ff" stroke-width="1"/>
<text x="629" y="509.2" font-size="10" font-weight="bold">ALICE</text>
<path d="M670.5 505.5H687.5" stroke="#000" stroke-width="1"/>
<text x="695" y="509.2" font-size="10" font-weight="bold">CMS</text>
<path d="M727.5 505.5H743.5" stroke="#ff0000" stroke-width="1"/>
<text x="750.5" y="509.2" font-size="10" font-weight="bold">LHCb</text>
</svg>
<div class="a t" style="top:538.06px;font-size:16px;color:#fff;-webkit-text-stroke:0.22px;left:525.79px;transform:scaleX(1.0892);transform-origin:0 0;">BIS status and SMP flags</div>
<div class="a t" style="top:538.06px;font-size:16px;color:#fff;-webkit-text-stroke:0.22px;left:900.77px;transform:scaleX(1.1044);transform-origin:0 0;">B1</div>
<div class="a t" style="top:538.06px;font-size:16px;color:#fff;-webkit-text-stroke:0.22px;left:965.8px;transform:scaleX(1.0843);transform-origin:0 0;">B2</div>
<div class="a" style="left:10px;top:560px;width:511px;height:175px;box-sizing:border-box;border:1px solid #0000ff;"></div>
<div class="a" style="left:521px;top:560px;width:511px;height:175px;box-sizing:border-box;border:1px solid #0000ff;"></div>
<div class="a" style="left:10px;top:735px;width:1022px;height:40px;box-sizing:border-box;border:1px solid #0000ff;"></div>
<div class="a t" style="top:562.91px;font-size:20.2px;color:#ffff00;left:11.36px;">Comments (02-Oct-2025 09:25:35)</div>
<div class="a t" style="top:591.05px;font-size:18.5px;color:#fff;-webkit-text-stroke:0.22px;left:151.15px;transform:scaleX(1.0873);transform-origin:0 0;">*** STABLE BEAMS ***</div>
<div class="a t" style="top:639.37px;font-size:18px;color:#fff;-webkit-text-stroke:0.22px;left:186.8px;transform:scaleX(1.1060);transform-origin:0 0;">all IPs on target</div>
<div class="a t" style="top:745.02px;font-size:17px;color:#ffff00;-webkit-text-stroke:0.22px;left:16.86px;transform:scaleX(1.0273);transform-origin:0 0;">AFS: 25ns_2460b_2448_2089_2227_144bpi_20inj</div>
<div class="a t" style="top:566.92px;font-size:17px;color:#fff;-webkit-text-stroke:0.22px;left:572.77px;transform:scaleX(1.0364);transform-origin:0 0;">Link Status of Beam Permits</div>
<div class="a" style="left:879px;top:565px;width:58px;height:20px;background:#00ff00;"></div>
<div class="a t" style="top:567.32px;font-size:17px;color:#000;-webkit-text-stroke:0.22px;left:889.51px;transform:scaleX(1.0812);transform-origin:0 0;">true</div>
<div class="a" style="left:951px;top:565px;width:58px;height:20px;background:#00ff00;"></div>
<div class="a t" style="top:567.32px;font-size:17px;color:#000;-webkit-text-stroke:0.22px;left:961.51px;transform:scaleX(1.0812);transform-origin:0 0;">true</div>
<div class="a t" style="top:595.57px;font-size:17px;color:#fff;-webkit-text-stroke:0.22px;left:607.75px;transform:scaleX(1.0465);transform-origin:0 0;">Global Beam Permit</div>
<div class="a" style="left:879px;top:594px;width:58px;height:20px;background:#00ff00;"></div>
<div class="a t" style="top:595.97px;font-size:17px;color:#000;-webkit-text-stroke:0.22px;left:889.51px;transform:scaleX(1.0812);transform-origin:0 0;">true</div>
<div class="a" style="left:951px;top:594px;width:58px;height:20px;background:#00ff00;"></div>
<div class="a t" style="top:595.97px;font-size:17px;color:#000;-webkit-text-stroke:0.22px;left:961.51px;transform:scaleX(1.0812);transform-origin:0 0;">true</div>
<div class="a t" style="top:624.22px;font-size:17px;color:#fff;-webkit-text-stroke:0.22px;left:642.08px;transform:scaleX(1.0476);transform-origin:0 0;">Setup Beam</div>
<div class="a" style="left:879px;top:623px;width:58px;height:20px;background:#ff0000;"></div>
<div class="a t" style="top:624.62px;font-size:17px;color:#000;-webkit-text-stroke:0.22px;left:887.6px;transform:scaleX(1.0218);transform-origin:0 0;">false</div>
<div class="a" style="left:951px;top:623px;width:58px;height:20px;background:#ff0000;"></div>
<div class="a t" style="top:624.62px;font-size:17px;color:#000;-webkit-text-stroke:0.22px;left:959.6px;transform:scaleX(1.0218);transform-origin:0 0;">false</div>
<div class="a t" style="top:652.87px;font-size:17px;color:#fff;-webkit-text-stroke:0.22px;left:628.77px;transform:scaleX(1.0384);transform-origin:0 0;">Beam Presence</div>
<div class="a" style="left:879px;top:652px;width:58px;height:20px;background:#00ff00;"></div>
<div class="a t" style="top:653.27px;font-size:17px;color:#000;-webkit-text-stroke:0.22px;left:889.51px;transform:scaleX(1.0812);transform-origin:0 0;">true</div>
<div class="a" style="left:951px;top:652px;width:58px;height:20px;background:#00ff00;"></div>
<div class="a t" style="top:653.27px;font-size:17px;color:#000;-webkit-text-stroke:0.22px;left:961.51px;transform:scaleX(1.0812);transform-origin:0 0;">true</div>
<div class="a t" style="top:681.52px;font-size:17px;color:#fff;-webkit-text-stroke:0.22px;left:565.73px;transform:scaleX(1.0583);transform-origin:0 0;">Moveable Devices Allowed In</div>
<div class="a" style="left:879px;top:680px;width:58px;height:20px;background:#00ff00;"></div>
<div class="a t" style="top:681.92px;font-size:17px;color:#000;-webkit-text-stroke:0.22px;left:889.51px;transform:scaleX(1.0812);transform-origin:0 0;">true</div>
<div class="a" style="left:951px;top:680px;width:58px;height:20px;background:#00ff00;"></div>
<div class="a t" style="top:681.92px;font-size:17px;color:#000;-webkit-text-stroke:0.22px;left:961.51px;transform:scaleX(1.0812);transform-origin:0 0;">true</div>
<div class="a t" style="top:710.17px;font-size:17px;color:#fff;-webkit-text-stroke:0.22px;left:636.35px;transform:scaleX(1.0303);transform-origin:0 0;">Stable Beams</div>
<div class="a" style="left:879px;top:709px;width:58px;height:20px;background:#00ff00;"></div>
<div class="a t" style="top:710.57px;font-size:17px;color:#000;-webkit-text-stroke:0.22px;left:889.51px;transform:scaleX(1.0812);transform-origin:0 0;">true</div>
<div class="a" style="left:951px;top:709px;width:58px;height:20px;background:#00ff00;"></div>
<div class="a t" style="top:710.57px;font-size:17px;color:#000;-webkit-text-stroke:0.22px;left:961.51px;transform:scaleX(1.0812);transform-origin:0 0;">true</div>
<div class="a t" style="top:746.52px;font-size:17px;color:#fff;-webkit-text-stroke:0.22px;left:528.07px;transform:scaleX(1.0372);transform-origin:0 0;">PM Status B1</div>
<div class="a" style="left:649px;top:740px;width:117px;height:32px;background:#00ff00;"></div>
<div class="a t" style="top:747.62px;font-size:17px;color:#000;-webkit-text-stroke:0.22px;left:664.49px;transform:scaleX(1.0565);transform-origin:0 0;">ENABLED</div>
<div class="a t" style="top:746.52px;font-size:17px;color:#fff;-webkit-text-stroke:0.22px;left:781.57px;transform:scaleX(1.0362);transform-origin:0 0;">PM Status B2</div>
<div class="a" style="left:903px;top:740px;width:125px;height:32px;background:#00ff00;"></div>
<div class="a t" style="top:747.62px;font-size:17px;color:#000;-webkit-text-stroke:0.22px;left:922.49px;transform:scaleX(1.0532);transform-origin:0 0;">ENABLED</div>
</div></body></html>
